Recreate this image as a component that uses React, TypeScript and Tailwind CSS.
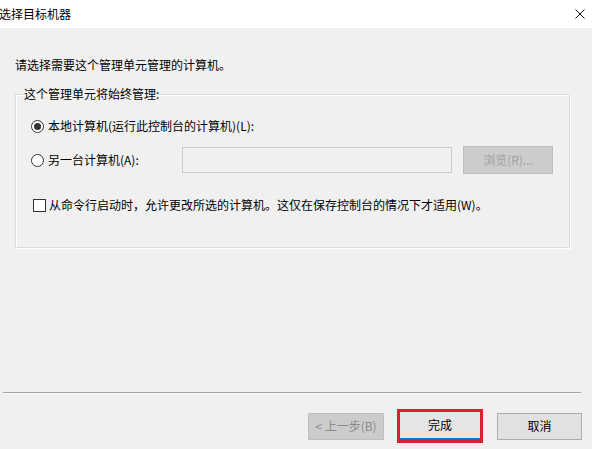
import { ReactNode } from 'react';

const FONT = 'font-["Microsoft_YaHei_UI","Noto_Sans_CJK_SC",sans-serif]';

function Radio({ checked }: { checked?: boolean }) {
  return (
    <span className="flex-shrink-0 w-[13px] h-[13px] rounded-full border border-[#333333] bg-white flex items-center justify-center">
      {checked && <span className="w-[7px] h-[7px] rounded-full bg-[#333333]" />}
    </span>
  );
}

function Button({ children, disabled, className = '' }: { children: ReactNode; disabled?: boolean; className?: string }) {
  return (
    <div
      className={`h-[27px] flex items-center justify-center border text-[12px] ${
        disabled ? 'bg-[#cccccc] border-[#bfbfbf] text-[#8a8a8a]' : 'bg-[#e1e1e1] border-[#adadad] text-black'
      } ${className}`}
    >
      {children}
    </div>
  );
}

export default function App() {
  return (
    <div className={`w-[592px] h-[449px] bg-[#f0f0f0] flex flex-col text-[12px] leading-[16px] text-black ${FONT}`}>
      {/* title bar */}
      <div className="h-[28px] bg-white flex items-center justify-between flex-shrink-0">
        <span className="-ml-[1px] text-[12px]">选择目标机器</span>
        <svg width="10" height="10" viewBox="0 0 10 10" className="mr-[7px]">
          <path d="M0.5 0.5 L9.5 9.5 M9.5 0.5 L0.5 9.5" stroke="#111" strokeWidth="1" fill="none" />
        </svg>
      </div>

      <div className="pl-[15px] pr-[22px]">
        <p className="mt-[29px]">请选择需要这个管理单元管理的计算机。</p>

        <fieldset className="mt-[13px] border border-[#dcdcdc] shadow-[inset_1px_1px_0_#ffffff,1px_1px_0_#ffffff] pl-[15px] pr-[16px] pb-[34px]">
          <legend className="-ml-[8px] px-[1px] leading-[16px]">这个管理单元将始终管理:</legend>

          <div className="mt-[16px] flex items-center gap-[4px]">
            <Radio checked />
            <span>本地计算机(运行此控制台的计算机)(L):</span>
          </div>

          <div className="mt-[12px] flex items-center">
            <div className="w-[151px] flex items-center gap-[4px]">
              <Radio />
              <span>另一台计算机(A):</span>
            </div>
            <div className="w-[270px] h-[26px] border border-[#cccccc] bg-[#f0f0f0]" />
            <Button disabled className="ml-[11px] w-[90px] h-[28px] text-[#a0a0a0]">
              浏览(R)...
            </Button>
          </div>

          <div className="mt-[23px] ml-[2px] flex items-center gap-[3px]">
            <span className="flex-shrink-0 w-[13px] h-[13px] border border-[#333333] bg-white" />
            <span>从命令行启动时，允许更改所选的计算机。这仅在保存控制台的情况下才适用(W)。</span>
          </div>
        </fieldset>
      </div>

      <div className="flex-1" />

      {/* separator + wizard buttons */}
      <div className="ml-[3px] mr-[11px] border-t border-[#a0a0a0] border-b border-b-white" />
      <div className="flex items-center justify-end pr-[10px] pt-[15px] pb-[6px]">
        <Button disabled className="w-[76px]">
          &lt; 上一步(B)
        </Button>
        <div className="ml-[13px] w-[86px] h-[34px] border-[3px] border-[#d7232f] bg-[#e5e5e5] flex flex-col">
          <div className="flex-1 flex items-center justify-center">完成</div>
          <div className="h-[2px] bg-[#0078d7]" />
        </div>
        <Button className="ml-[14px] w-[85px]">取消</Button>
      </div>
    </div>
  );
}
